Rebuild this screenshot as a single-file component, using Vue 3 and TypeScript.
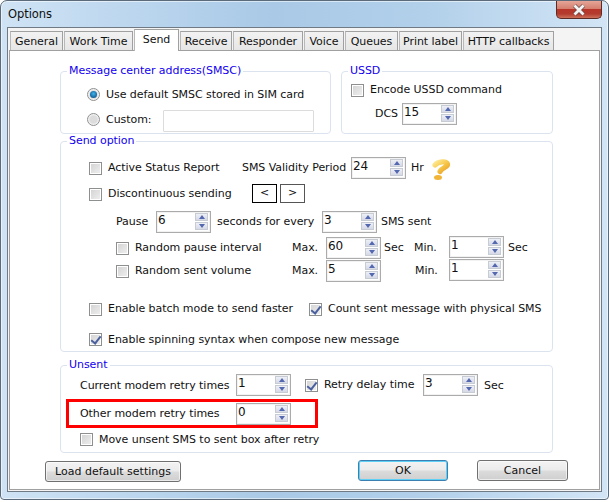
<script setup lang="ts">
const tabs: string[] = ['General', 'Work Time', 'Send', 'Receive', 'Responder', 'Voice', 'Queues', 'Print label', 'HTTP callbacks']
</script>

<template>
  <div class="window">
    <header class="titlebar">
      <span class="title">Options</span>
      <button class="close" aria-label="Close">
        <svg width="14" height="12" viewBox="0 0 14 12">
          <path d="M2.500 1.500 L11.500 10.500 M11.500 1.500 L2.500 10.500" stroke="#6b4a48" stroke-width="4.200" />
          <path d="M2.500 1.500 L11.500 10.500 M11.500 1.500 L2.500 10.500" stroke="#f4f4f4" stroke-width="2.800" />
        </svg>
      </button>
    </header>
    <div class="client">
      <nav class="tabs">
        <span v-for="t in tabs" :key="t" class="tab" :class="['tab-' + t.split(' ')[0].toLowerCase(), { active: t === 'Send' }]">{{ t }}</span>
      </nav>
      <main class="pane">
        <div class="top-groups">
          <fieldset class="group smsc">
            <legend>Message center address(SMSC)</legend>
            <div class="row r-a">
              <i class="radio on"></i><span class="ml6 low">Use default SMSC stored in SIM card</span>
            </div>
            <div class="row r-b">
              <i class="radio"></i><span class="ml6 w57 low">Custom:</span><span class="textbox"></span>
            </div>
          </fieldset>
          <fieldset class="group ussd">
            <legend>USSD</legend>
            <div class="row r-u1">
              <i class="check"></i><span class="ml6">Encode USSD command</span>
            </div>
            <div class="row r-u2">
              <span class="w27">DCS</span>
              <div class="spin"><span>15</span><div class="btns"><i class="up"></i><i class="dn"></i></div></div>
            </div>
          </fieldset>
        </div>

        <fieldset class="group send">
          <legend>Send option</legend>
          <div class="row s1 in29">
            <i class="check"></i><span class="ml6 w134">Active Status Report</span><span class="w109">SMS Validity Period</span>
            <div class="spin"><span>24</span><div class="btns"><i class="up"></i><i class="dn"></i></div></div>
            <span class="ml5 w20">Hr</span>
            <svg class="help" width="24" height="26" viewBox="0 0 24 26">
              <defs>
                <linearGradient id="gold" x1="0" y1="0" x2="1" y2="1">
                  <stop offset="0" stop-color="#fde88f" />
                  <stop offset="0.55" stop-color="#f6c445" />
                  <stop offset="1" stop-color="#e8a02a" />
                </linearGradient>
              </defs>
              <path d="M4 10 C7 6.500 15 5.500 16.500 9 C17.500 12 10.500 12.500 9 16.500" fill="none" stroke="url(#gold)" stroke-width="5.200" stroke-linecap="round" stroke-linejoin="round" />
              <ellipse cx="7" cy="22.500" rx="4" ry="2.500" fill="#f1b436" />
            </svg>
          </div>
          <div class="row s2 in29">
            <i class="check"></i><span class="ml6 w144">Discontinuous sending</span>
            <button class="nav focus">&lt;</button><button class="nav ml3">&gt;</button>
          </div>
          <div class="row s3 in56">
            <span class="w40">Pause</span>
            <div class="spin"><span>6</span><div class="btns"><i class="up"></i><i class="dn"></i></div></div>
            <span class="ml6 w105">seconds for every</span>
            <div class="spin"><span>3</span><div class="btns"><i class="up"></i><i class="dn"></i></div></div>
            <span class="ml4">SMS sent</span>
          </div>
          <div class="row s4 in56">
            <i class="check"></i><span class="ml6 w157">Random pause interval</span><span class="w34">Max.</span>
            <div class="spin"><span>60</span><div class="btns"><i class="up"></i><i class="dn"></i></div></div>
            <span class="ml3 w30">Sec</span><span class="w35">Min.</span>
            <div class="spin up1"><span>1</span><div class="btns"><i class="up"></i><i class="dn"></i></div></div>
            <span class="ml4">Sec</span>
          </div>
          <div class="row s5 in56">
            <i class="check"></i><span class="ml6 w157">Random sent volume</span><span class="w34">Max.</span>
            <div class="spin"><span>5</span><div class="btns"><i class="up"></i><i class="dn"></i></div></div>
            <span class="w34 ml34">Min.</span>
            <div class="spin up1"><span>1</span><div class="btns"><i class="up"></i><i class="dn"></i></div></div>
          </div>
          <div class="row s6 in29">
            <i class="check"></i><span class="ml6 w201">Enable batch mode to send faster</span>
            <i class="check on"></i><span class="ml6">Count sent message with physical SMS</span>
          </div>
          <div class="row s7 in29">
            <i class="check on"></i><span class="ml6 low">Enable spinning syntax when compose new message</span>
          </div>
        </fieldset>

        <fieldset class="group unsent">
          <legend>Unsent</legend>
          <div class="row u1 in20">
            <span class="w156 low">Current modem retry times</span>
            <div class="spin"><span>1</span><div class="btns"><i class="up"></i><i class="dn"></i></div></div>
            <i class="check on ml14"></i><span class="ml6 w99">Retry delay time</span>
            <div class="spin"><span>3</span><div class="btns"><i class="up"></i><i class="dn"></i></div></div>
            <span class="ml6 low">Sec</span>
          </div>
          <div class="row mark">
            <span class="w156">Other modem retry times</span>
            <div class="spin"><span>0</span><div class="btns"><i class="up"></i><i class="dn"></i></div></div>
          </div>
          <div class="row u3 in20">
            <i class="check"></i><span class="ml6">Move unsent SMS to sent box after retry</span>
          </div>
        </fieldset>

        <div class="actions">
          <button class="btn load">Load default settings</button>
          <button class="btn ok">OK</button>
          <button class="btn cancel">Cancel</button>
        </div>
      </main>
    </div>
  </div>
</template>

<style>
html, body { margin: 0; background: #fff; }
</style>

<style scoped>
.window {
  width: 609px; height: 500px; box-sizing: border-box; overflow: hidden; position: relative;
  font: 11px/16px "DejaVu Sans", sans-serif; color: #111; letter-spacing: -0.05px;
  border: 1px solid #5b6b7c; border-radius: 7px 7px 4px 4px;
  background: linear-gradient(90deg, #cfe3f4 0%, #bdd7ef 20%, #a9c9e6 45%, #b2d0ea 70%, #d2e5f6 100%);
  box-shadow: inset 0 0 0 1px rgba(255,255,255,.55);
}
.titlebar { height: 26px; display: flex; align-items: flex-start; justify-content: space-between; padding: 0 6px 0 7px; }
.title { font-size: 11.500px; margin-top: 5px; color: #101010; }
.close {
  width: 46px; height: 18px; border: 1px solid #5e2a24; border-top: 0; border-radius: 0 0 5px 5px; padding: 0;
  display: flex; align-items: center; justify-content: center; margin-top: 0;
  background: linear-gradient(#e5a698 0%, #d47f6f 45%, #b8352a 50%, #b33a2c 75%, #cd6f5a 100%);
}
.client {
  width: 595px; height: 465px; margin-left: 6px; box-sizing: border-box; position: relative;
  background: #f4f4f4; border: 1px solid #6f7a85; padding: 1px 1px 0 1px;
}
.tabs { display: flex; height: 21px; align-items: flex-end; padding-left: 1px; position: relative; z-index: 1; }
.tab {
  box-sizing: border-box; height: 19px; border: 1px solid #a0a0a0; border-bottom: 0; border-left-color: #b8b8b8;
  background: linear-gradient(#f2f2f2, #e6e6e6); text-align: center; line-height: 20px;
  margin-right: 1px; white-space: nowrap;
}
.tab-general { width: 53px; } .tab-work { width: 69px; }
.tab-send { width: 45px; height: 22px; background: #fff; margin-bottom: -1px; line-height: 20px; }
.tab-receive { width: 52px; } .tab-responder { width: 70px; } .tab-voice { width: 40px; }
.tab-queues { width: 53px; } .tab-print { width: 63px; } .tab-http { width: 91px; }
.pane {
  box-sizing: border-box; height: 440px; width: 591px; background: #fff; border: 1px solid #a0a0a0; padding: 12px 0 0 50px;
}
.top-groups { display: flex; gap: 10px; }
fieldset.group { padding: 0; min-width: 0; box-sizing: border-box; border: 1px solid #dbe3ee; border-radius: 4px; }
legend { margin-left: 6px; padding: 0 2px 0 2px; color: #1200f0; line-height: 16px; }
fieldset.smsc { width: 271px; height: 71px; margin: 0; }
fieldset.ussd { width: 212px; height: 71px; margin: 0; }
fieldset.send { width: 493px; height: 219px; margin: -1px 0 0; }
fieldset.unsent { width: 493px; height: 96px; margin: 5px 0 0; }
.row { display: flex; align-items: center; height: 22px; white-space: nowrap; }
.low { margin-top: 2px; }
.r-a { margin: 4px 0 0 26px; }
.r-b { margin: 3px 0 0 26px; }
.r-u1 { margin: 2px 0 0 9px; height: 18px; }
.r-u2 { margin: 4px 0 0 33px; }
.in29 { margin-left: 28px; } .in56 { margin-left: 55px; } .in20 { margin-left: 19px; }
.s1 { margin-top: 8px; } .s2 { margin-top: 4px; } .s3 { margin-top: 6px; } .s4 { margin-top: 4px; } .s5 { margin-top: 1px; }
.s6 { margin-top: 16px; } .s7 { margin-top: 8px; }
.u1 { margin-top: 1px; }
.mark { box-sizing: border-box; width: 252px; height: 29px; margin: 3px 0 0 5px; padding-left: 11px; border: 3px solid #f00; }
.u3 { margin-top: 0; height: 23px; }

.w27 { width: 27px; } .w20 { width: 20px; } .w30 { width: 30px; } .w34 { width: 34px; } .w35 { width: 35px; } .w40 { width: 40px; } .w57 { width: 57px; }
.w99 { width: 99px; } .w105 { width: 105px; } .w109 { width: 109px; } .w134 { width: 134px; } .w144 { width: 144px; } .w156 { width: 156px; } .w157 { width: 157px; } .w201 { width: 201px; }
.ml3 { margin-left: 3px; } .ml4 { margin-left: 4px; } .ml5 { margin-left: 5px; } .ml6 { margin-left: 6px; } .ml14 { margin-left: 14px; } .ml34 { margin-left: 34px; }
.up1 { margin-top: -2px; }

.textbox { width: 151px; height: 22px; box-sizing: border-box; border: 1px solid #dcdcdc; border-radius: 1px; margin-top: 4px; background: #fff; }
.radio {
  width: 13px; height: 13px; box-sizing: border-box; border-radius: 50%; border: 1px solid #8e8f8f; flex: none; position: relative;
  background: radial-gradient(circle at 50% 50%, #dcdcdc 0 45%, #fbfbfb 75%);
}
.radio.on::after {
  content: ""; position: absolute; inset: 2px; border-radius: 50%;
  background: radial-gradient(circle at 50% 40%, #3fb4e8 0, #1a6ea8 60%, #114a76 100%);
}
.check {
  width: 13px; height: 13px; box-sizing: border-box; border: 1px solid #8e8f8f; flex: none; position: relative;
  background: linear-gradient(135deg, #d2d2d2, #f0f0f0); box-shadow: inset 0 0 0 1px #fff;
}
.check.on::after {
  content: ""; position: absolute; left: 3px; top: 0; width: 4px; height: 8px;
  border: solid #4a5f9e; border-width: 0 2px 2px 0; transform: rotate(38deg);
}
.spin {
  width: 55px; height: 22px; box-sizing: border-box; border: 1px solid #ababab; display: flex; justify-content: space-between;
  background: #fff; padding: 1px 2px 1px 1px; flex: none; box-shadow: inset 0 0 0 1px #f2f2f2;
  line-height: 15px; font-size: 12px;
}
.btns { display: flex; flex-direction: column; width: 13px; gap: 0; }
.btns i {
  flex: 1; position: relative; border: 1px solid #c6cbd4; background: linear-gradient(#eef0f6, #d5d9e6); margin-bottom: 1px;
}
.btns i::after {
  content: ""; position: absolute; left: 50%; top: 50%; margin: -2px 0 0 -3px; border: 3px solid transparent;
}
.btns .up::after { border-top: 0; border-bottom: 4px solid #5468b0; }
.btns .dn::after { border-bottom: 0; border-top: 4px solid #5468b0; }
.help { margin-left: 0; flex: none; margin-top: -1px; }
.nav {
  width: 25px; height: 19px; padding: 0; box-sizing: border-box; background: #fff; border: 1px solid #555; font: 11px/14px "DejaVu Sans", sans-serif; color: #111; margin-top: -2px;
}
.nav.focus { border-color: #000; }
.actions { display: flex; margin: 7px 0 0 -15px; align-items: flex-start; }
.btn {
  box-sizing: border-box; height: 21px; padding: 0; font: 11px/18px "DejaVu Sans", sans-serif; color: #111; border: 1px solid #707070; border-radius: 3px;
  background: linear-gradient(#f3f3f3 0%, #ebebeb 48%, #dcdcdc 52%, #cfcfcf 100%);
  box-shadow: inset 0 0 0 1px rgba(255,255,255,.6);
}
.load { width: 136px; margin-top: 1px; }
.ok { width: 90px; margin-left: 177px; border-color: #3c7fb1; box-shadow: inset 0 0 0 1px #5fd0f5; }
.cancel { width: 91px; margin-left: 29px; }
</style>
